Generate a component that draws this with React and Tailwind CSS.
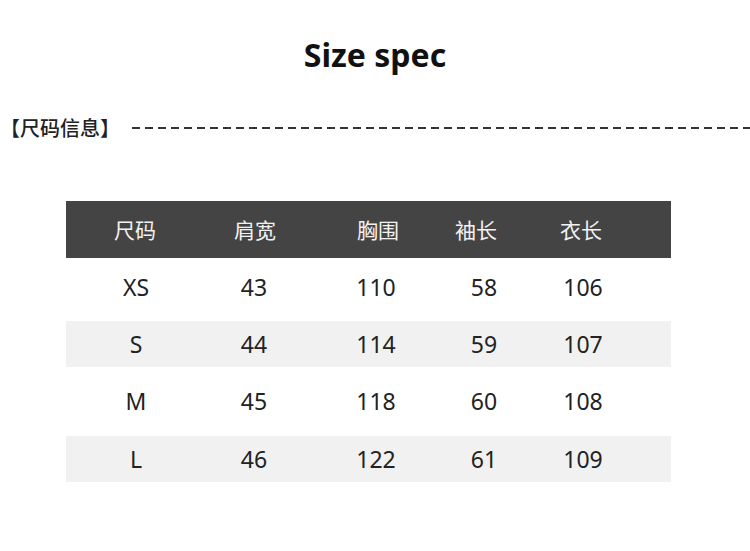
import React from "react";

const headers = [
  { label: "尺码", pad: "pr-[2px]" },
  { label: "肩宽", pad: "pl-[2px]" },
  { label: "胸围", pad: "pl-[4px]" },
  { label: "袖长", pad: "pr-[16px]" },
  { label: "衣长", pad: "pr-[4px]" },
];

const rows = [
  { cells: ["XS", "43", "110", "58", "106"], bg: "bg-white", h: "h-[63px] pb-[4px]" },
  { cells: ["S", "44", "114", "59", "107"], bg: "bg-[#f1f1f1]", h: "h-[46px]" },
  { cells: ["M", "45", "118", "60", "108"], bg: "bg-white", h: "h-[69px]" },
  { cells: ["L", "46", "122", "61", "109"], bg: "bg-[#f1f1f1]", h: "h-[46px]" },
];

// column widths inside the 605px table
const cols = "grid grid-cols-[140px_96px_148px_68px_130px_1fr]";

export default function App() {
  return (
    <main
      className="w-[750px] h-[551px] bg-white overflow-hidden text-[#222]"
      style={{ fontFamily: '"Noto Sans", "Noto Sans CJK SC", sans-serif' }}
    >
      <h1 className="pt-[35px] text-center text-[32px] leading-[40px] font-bold text-[#111]">
        Size spec
      </h1>

      <div className="mt-[38px] h-[30px] flex items-center">
        <span className="shrink-0 text-[20px] leading-[30px] font-medium text-[#222] [font-family:'Noto_Sans_CJK_SC',sans-serif]">
          【尺码信息】
        </span>
        <div className="ml-[12px] flex-1 h-[1.5px] bg-[repeating-linear-gradient(to_right,#333_0_8px,transparent_8px_13px)]" />
      </div>

      <div className="mt-[58px] ml-[66px] w-[605px]">
        <div className={`${cols} h-[57px] items-center bg-[#444444]`}>
          {headers.map((h) => (
            <div
              key={h.label}
              className={`text-center text-[21px] text-[#f2f2f2] [font-family:'Noto_Sans_CJK_SC',sans-serif] ${h.pad}`}
            >
              {h.label}
            </div>
          ))}
        </div>
        {rows.map((r) => (
          <div key={r.cells[0]} className={`${cols} items-center ${r.bg} ${r.h}`}>
            {r.cells.map((c, i) => (
              <div key={i} className="text-center text-[23px]">
                {c}
              </div>
            ))}
          </div>
        ))}
      </div>
    </main>
  );
}
